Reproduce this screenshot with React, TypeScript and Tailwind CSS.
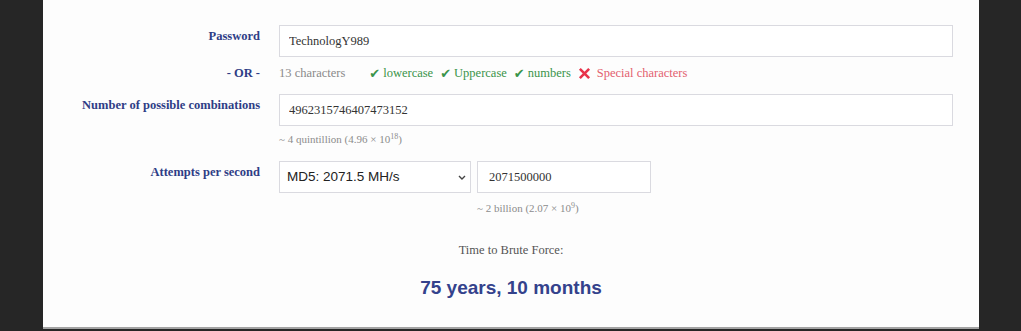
import { useState } from 'react';

const serif = "font-['Liberation_Serif','Times_New_Roman',serif]";
const sans = "font-['Liberation_Sans',Arial,sans-serif]";

export default function App() {
  const [password, setPassword] = useState('TechnologY989');
  const [combos, setCombos] = useState('4962315746407473152');
  const [rate, setRate] = useState('2071500000');

  return (
    <div className="h-[331px] w-full bg-[#262626] overflow-hidden">
      <div className={`ml-[43px] w-[936px] h-[329px] bg-[#fdfdfd] border-b-2 border-[#a3a3a3] pt-[25px] pr-[26px] ${serif}`}>
        {/* password */}
        <Row label="Password">
          <input
            value={password}
            onChange={(e) => setPassword(e.target.value)}
            className={`w-full h-[32px] border border-[#dadae0] bg-white pl-[9px] text-[12.5px] text-[#333] outline-none ${serif}`}
          />
        </Row>

        <div className="flex items-center mt-[8px] h-[16px]">
          <div className="w-[217px] shrink-0 text-right text-[12.5px] font-bold text-[#2f3d86]">- OR -</div>
          <div className="ml-[19px] flex items-center text-[12.5px]">
            <span className="text-[#8a8a8a]">13 characters</span>
            <div className="ml-[24px] flex items-center gap-[7px]">
              <Check label="lowercase" />
              <Check label="Uppercase" />
              <Check label="numbers" />
              <span className="flex items-center text-[#e3606f]">
                <svg width="13" height="13" viewBox="0 0 14 14" className="mr-[6px]">
                  <path d="M2 2 L12 12 M12 2 L2 12" stroke="#e8334a" strokeWidth="2.8" strokeLinecap="butt" />
                </svg>
                Special characters
              </span>
            </div>
          </div>
        </div>

        {/* combinations */}
        <div className="mt-[13px]">
          <Row label="Number of possible combinations">
            <input
              value={combos}
              onChange={(e) => setCombos(e.target.value)}
              className={`w-full h-[32px] border border-[#dadae0] bg-white pl-[9px] text-[12.5px] text-[#333] outline-none ${serif}`}
            />
            <div className="mt-[6px] h-[14px] leading-[14px] text-[11px] text-[#8c8c8c]">
              ~ 4 quintillion (4.96 × 10<sup className="text-[8px]">18</sup>)
            </div>
          </Row>
        </div>

        {/* attempts */}
        <div className="mt-[15px]">
          <Row label="Attempts per second">
            <div className="flex gap-[6px]">
              <div className="relative w-[192px]">
                <select
                  defaultValue="md5"
                  className={`appearance-none w-full h-[32px] border border-[#dadae0] bg-white pl-[7px] text-[13.5px] text-[#222] outline-none ${sans}`}
                >
                  <option value="md5">MD5: 2071.5 MH/s</option>
                  <option value="sha1">SHA1: 697.8 MH/s</option>
                  <option value="sha256">SHA256: 271.2 MH/s</option>
                </select>
                <svg width="8" height="5" viewBox="0 0 8 5" className="absolute left-[179px] top-[14px] pointer-events-none">
                  <path d="M1 1 L4 4 L7 1" stroke="#444" strokeWidth="1.4" fill="none" />
                </svg>
              </div>
              <div>
                <input
                  value={rate}
                  onChange={(e) => setRate(e.target.value)}
                  className={`w-[174px] h-[32px] border border-[#dadae0] bg-white pl-[11px] text-[12.5px] text-[#333] outline-none ${serif}`}
                />
                <div className="mt-[8px] h-[14px] leading-[14px] text-[11px] text-[#8c8c8c]">
                  ~ 2 billion (2.07 × 10<sup className="text-[8px]">9</sup>)
                </div>
              </div>
            </div>
          </Row>
        </div>

        {/* result */}
        <div className="pl-[26px]">
          <div className="mt-[27px] h-[16px] leading-[16px] text-center text-[12.5px] text-[#555]">Time to Brute Force:</div>
          <div className={`mt-[18px] h-[24px] leading-[24px] text-center text-[19px] font-bold text-[#34428c] ${sans}`}>
            75 years, 10 months
          </div>
        </div>
      </div>
    </div>
  );
}

function Row({ label, children }: { label: string; children: React.ReactNode }) {
  return (
    <div className="flex">
      <div className="w-[217px] shrink-0 text-right pt-[3px] leading-[16px] text-[12.5px] font-bold text-[#2f3d86]">{label}</div>
      <div className="ml-[19px] flex-1">{children}</div>
    </div>
  );
}

function Check({ label }: { label: string }) {
  return (
    <span className="flex items-center text-[#3a944a]">
      <span className="mr-[3px] font-['DejaVu_Sans',sans-serif] text-[13px] leading-none">✔</span>
      {label}
    </span>
  );
}
